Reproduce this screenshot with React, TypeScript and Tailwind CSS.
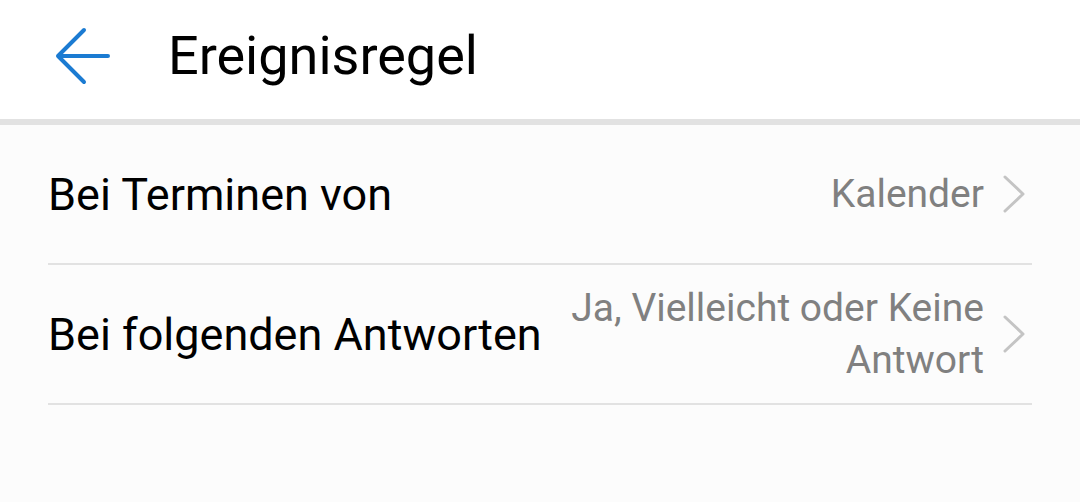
const Chevron = () => (
  <svg width="24" height="40" viewBox="0 0 24 40" fill="none" className="shrink-0">
    <path d="M3 3 L21 20 L3 37" stroke="#c4c4c4" strokeWidth="3" strokeLinecap="round" strokeLinejoin="round" />
  </svg>
);

const Row = ({ label, value }: { label: string; value: string }) => (
  <div className="flex items-center justify-between h-[140px] border-b-2 border-[#e2e2e2] pr-[6px]">
    <div className="text-[45px] text-black leading-none">{label}</div>
    <div className="flex items-center gap-[18px]">
      <div className="text-[39px] leading-[52px] text-[#808080] text-right max-w-[420px]">{value}</div>
      <Chevron />
    </div>
  </div>
);

export default function App() {
  return (
    <div
      className="w-[1080px] h-[502px] bg-[#fcfcfc] overflow-hidden"
      style={{ fontFamily: "Roboto, 'Noto Sans', sans-serif" }}
    >
      <div className="h-[119px] bg-white flex items-center pb-[8px]">
        <div className="w-[168px] flex items-center pl-[55px]">
          <svg width="56" height="58" viewBox="0 0 56 58" fill="none">
            <path
              d="M3 29 L53 29 M29 3 L3 29 L29 55"
              stroke="#1b7bd2"
              strokeWidth="4"
              strokeLinecap="round"
              strokeLinejoin="round"
            />
          </svg>
        </div>
        <h1 className="text-[54px] text-black leading-none">Ereignisregel</h1>
      </div>
      <div className="h-[6px] bg-[#e2e2e2]" />
      <div className="px-[48px]">
        <Row label="Bei Terminen von" value="Kalender" />
        <Row label="Bei folgenden Antworten" value="Ja, Vielleicht oder Keine Antwort" />
      </div>
    </div>
  );
}
